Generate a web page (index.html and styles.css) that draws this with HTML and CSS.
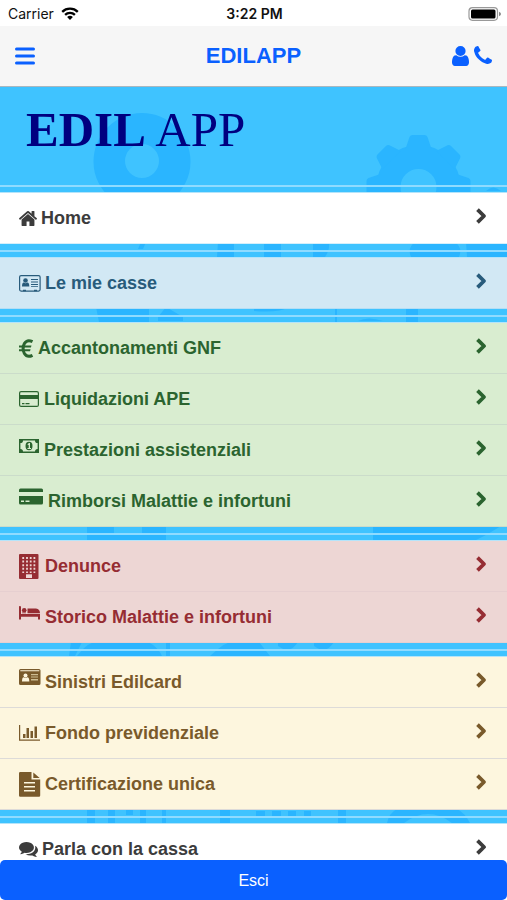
FILE: index.html
```html
<!DOCTYPE html>
<html lang="it">
<head>
<meta charset="utf-8">
<meta name="viewport" content="width=device-width, initial-scale=1">
<title>EDILAPP</title>
<link rel="stylesheet" href="styles.css">
</head>
<body>
<svg width="0" height="0" class="defs" aria-hidden="true">
  <symbol id="chevron" viewBox="0 0 12 18"><path d="M2.500 2.700 9 9l-6.500 6.300" fill="none" stroke="currentColor" stroke-width="3.800" stroke-linejoin="round"/></symbol>
</svg>
<div class="app">
  <div class="status">
    <div class="carrier">Carrier
      <svg width="18" height="13" viewBox="0 0 18 13" aria-hidden="true"><g fill="none" stroke="#000" stroke-width="2.300"><path d="M1.200 4.800a11.200 11.200 0 0 1 15.600 0"/><path d="M4.100 7.900a7 7 0 0 1 9.800 0"/></g><path d="M9 13 6.100 10.100a4.200 4.200 0 0 1 5.800 0z"/></svg>
    </div>
    <div class="clock">3:22 PM</div>
    <svg class="battery" width="33" height="14" viewBox="0 0 33 14" aria-hidden="true"><rect x="1" y=".700" width="28.500" height="12.600" rx="3.500" fill="#fff" stroke="#999" stroke-width="1.200"/><rect x="3" y="2.500" width="24.500" height="9" rx="1.500"/><path d="M31 4.700q2 .8 2 2.300t-2 2.300z" fill="#888"/></svg>
  </div>
  <header class="navbar">
    <button class="icon-button" aria-label="Menu"><svg width="20" height="18" viewBox="0 0 20 18"><path d="M1.500 2h17M1.500 9h17M1.500 16h17" stroke="currentColor" stroke-width="3" stroke-linecap="round"/></svg></button>
    <h1 class="navbar-title">EDILAPP</h1>
    <div class="actions">
      <button class="icon-button" aria-label="Profilo"><svg width="17" height="20" viewBox="256 128 1280 1536" preserveAspectRatio="none"><path fill="currentColor" d="M1536 1399q0 109-62.500 187t-150.500 78h-854q-88 0-150.500-78t-62.500-187q0-85 8.500-160.500t31.500-152 58.500-131 94-89 134.500-34.500q131 128 313 128t313-128q76 0 134.500 34.500t94 89 58.500 131 31.500 152 8.500 160.500zm-256-887q0 159-112.500 271.500t-271.500 112.500-271.500-112.500-112.500-271.500 112.500-271.500 271.500-112.500 271.500 112.500 112.500 271.500z"/></svg></button>
      <button class="icon-button" aria-label="Telefono"><svg width="18" height="18" viewBox="192 128 1408 1408"><path fill="currentColor" d="M1600 1240q0 27-10 70.500t-21 68.500q-21 50-122 106-94 51-186 51-27 0-53-3.500t-57.500-12.500-47-14.500-55.500-20.500-49-18q-98-35-175-83-127-79-264-216t-216-264q-48-77-83-175-3-9-18-49t-20.500-55.500-14.500-47-12.500-57.500-3.500-53q0-92 51-186 56-101 106-122 25-11 68.500-21t70.500-10q14 0 21 3 18 6 53 76 11 19 30 54t35 63.500 31 53.500q3 4 17.500 25t21.500 35.500 7 28.500q0 20-28.500 50t-62 55-62 53-28.500 46q0 9 5 22.500t8.500 20.500 14 24 11.500 19q76 137 174 235t235 174q2 1 19 11.500t24 14 20.500 8.500 22.500 5q18 0 46-28.500t53-62 55-62 50-28.500q14 0 28.500 7t35.500 21.500 25 17.500q25 15 53.500 31t63.500 35 54 30q70 35 76 53 3 7 3 21z"/></svg></button>
    </div>
  </header>
  <main class="content">
    <svg class="pattern" width="507" height="900" viewBox="0 0 507 900" aria-hidden="true">
      <g transform="translate(0 -88)" fill="#2ab5ff">
        <path fill-rule="evenodd" d="M142 114a48.500 48.500 0 0 1 48.500 48.500c0 34-30 40-48.500 84-18-44-48.500-50-48.500-84A48.500 48.500 0 0 1 142 114zm0 31a17 17 0 1 0 0 34 17 17 0 0 0 0-34z"/>
        <g transform="translate(418.500 188)">
          <circle r="30" fill="none" stroke="#2ab5ff" stroke-width="24"/>
          <path id="tooth" d="M-13-38-9-50q1-2 3-2H6q2 0 3 2L13-38z"/>
          <use href="#tooth" transform="rotate(45)"/><use href="#tooth" transform="rotate(90)"/><use href="#tooth" transform="rotate(-45)"/><use href="#tooth" transform="rotate(-90)"/>
        </g>
        <path d="M486 192q7-7 15 0zM264 243h17v15h-17zM313 243h16q1 8-4 15h-12zM218 243h16v15h-17zM138 250l3-7h5l-3 7zM411 258q-4-9 4-15h40q8 6 4 15zM466 243h41v15h-40z"/>
        <path d="M96 308h53v15H99zM158 318l8-10 17 10v4h-25zM254 308h35q-10 6-35 4zM335 308h2v15h-2zM406 308h12v15h-12zM358 322q10-5 25 0z"/>
        <path d="M87 527h27v14H87zM114 536h28v5h-28zM142 527h24v14h-24zM373 527h128l-15 9-10 5H373z"/>
        <path d="M71 643h11l-7 14h-6zM83 650q5-5 11-7h54q10 5 14 14H77zM166 643h4v14h-4zM218 650q6-5 12-7h24v14h-44zM254 643h5l11 14h-16zM278 643h20q-8 13-20 4zM314 643h20q-8 13-20 4z"/>
        <path d="M87 810h8v14h-8zM108 810h7v14h-7zM126 810h7v6h-7zM140 810h6v14h-6zM162 810h4v14h-4zM220 810h10v14h-10zM256 812h9v7h-9zM272 812h9v7h-9zM288 812h8v7h-8zM304 812h7v7h-7zM338 810h8v14h-8zM387 824q2-10 10-14h60q8 4 13 14h-18q-24-18-48 0z"/>
      </g>
    </svg>
    <div class="hero"><div class="logo"><strong>EDIL</strong> APP</div></div>
    <hr>
    <nav class="group neutral">
      <a class="row" href="#"><svg class="icon" width="18" height="15" viewBox="90 250 1612 1290" preserveAspectRatio="none"><path d="M1472 992v480q0 26-19 45t-45 19h-384v-384h-256v384h-384q-26 0-45-19t-19-45v-480q0-1 .5-3t.5-3l575-474 575 474q1 2 1 6zm223-69l-62 74q-8 9-21 11h-3q-13 0-21-7l-692-577-692 577q-12 8-24 7-13-2-21-11l-62-74q-8-10-7-23.500t11-21.500l719-599q32-26 76-26t76 26l244 204v-195q0-14 9-23t23-9h192q14 0 23 9t9 23v408l219 182q10 8 11 21.500t-7 23.500z"/></svg><span>Home</span><svg class="chevron"><use href="#chevron"/></svg></a>
    </nav>
    <hr>
    <nav class="group info">
      <a class="row" href="#"><svg class="icon" width="22" height="17" viewBox="0 0 22 17"><rect x=".6" y=".6" width="20.500" height="15.500" rx="1.500" fill="none" stroke="currentColor" stroke-width="1.200"/><circle cx="6.500" cy="5.500" r="2.300"/><path d="M3 11.500q0-4 1.800-4 1.700 1.400 3.500 0 2 0 2 4zM12 4h7v1h-7zM12 6.500h7v1h-7zM12 9h7v1h-7zM12 11.200h7v.800h-7zM4 14.700h3v1.500H4zM15 14.700h3v1.500h-3z"/></svg><span>Le mie casse</span><svg class="chevron"><use href="#chevron"/></svg></a>
    </nav>
    <hr>
    <nav class="group success">
      <a class="row" href="#"><svg class="icon" width="15" height="19" viewBox="0 0 15 19"><path d="M13.500 2.700Q8.200 0 5.400 4.500 2.800 9.500 5.400 14.500 8.200 19 13.500 16.300" fill="none" stroke="currentColor" stroke-width="3"/><path d="M0 6.500h12.500l-.6 2H0zM0 10.300h11.600l-.6 2H0z"/></svg><span>Accantonamenti GNF</span><svg class="chevron"><use href="#chevron"/></svg></a>
      <a class="row" href="#"><svg class="icon" width="21" height="16" viewBox="0 0 21 16"><rect x=".6" y=".6" width="18.800" height="14.800" rx="1.500" fill="none" stroke="currentColor" stroke-width="1.200"/><path d="M0 4h20v4H0zM3 12h2.500v1.200H3zM6.500 12h4v1.200h-4z"/></svg><span>Liquidazioni APE</span><svg class="chevron"><use href="#chevron"/></svg></a>
      <a class="row" href="#"><svg class="icon raised" width="21" height="14" viewBox="0 0 21 14"><path fill-rule="evenodd" d="M0 0h20v14H0zM4 1.400Q4 4 1.400 4v6Q4 10 4 12.600h12Q16 10 18.600 10V4Q16 4 16 1.400z"/><ellipse cx="10" cy="7" rx="3.500" ry="4.200"/><path d="M8.500 5.200 10 4h1v5h1v1H8.500V9H9.700V5.800l-.7.400z" fill="#d9edd0"/></svg><span>Prestazioni assistenziali</span><svg class="chevron"><use href="#chevron"/></svg></a>
      <a class="row" href="#"><svg class="icon raised" width="25" height="17" viewBox="0 0 25 17"><path fill-rule="evenodd" d="M0 4V2Q0 .5 1.500.5h21Q24 .5 24 2v2zM0 8h24v7q0 1.500-1.500 1.500h-21Q0 16.500 0 15zM2 12.500V14h3v-1.500zm4.500 0V14h4v-1.500z"/></svg><span>Rimborsi Malattie e infortuni</span><svg class="chevron"><use href="#chevron"/></svg></a>
    </nav>
    <hr>
    <nav class="group danger">
      <a class="row" href="#"><svg class="icon" width="22" height="25" viewBox="0 0 22 25"><rect width="19.500" height="25" rx="1"/><path d="M4.200 3v16M8 3v16M11.700 3v16M15.400 3v16" stroke="#edd6d4" stroke-width="1.800" stroke-dasharray="2 1.600"/><path d="M7 20.300h6V24H7z" fill="#edd6d4"/></svg><span>Denunce</span><svg class="chevron"><use href="#chevron"/></svg></a>
      <a class="row" href="#"><svg class="icon raised" width="22" height="14" viewBox="0 0 22 14"><path d="M0 .5Q0 0 .8 0t1.200.5V8h19v5.500h-2V10.800H2v2.700H0zM8.500 2.500H17q4 .5 4 4.800H8.500zM3 7.300V6.500h4v.8z"/><circle cx="5.200" cy="4.300" r="2.300"/></svg><span>Storico Malattie e infortuni</span><svg class="chevron"><use href="#chevron"/></svg></a>
    </nav>
    <hr>
    <nav class="group warning">
      <a class="row" href="#"><svg class="icon raised" width="22" height="17" viewBox="0 0 22 17"><path fill-rule="evenodd" d="M1.500 0h18.500q1.500 0 1.500 1.500v13q0 1.500-1.500 1.500H1.500Q0 16 0 14.500v-13Q0 0 1.500 0zM1.300 1.300v1h19v-1z"/><circle cx="6.500" cy="6.500" r="2" fill="#fdf6de"/><path d="M3 12.500q0-4.300 1.800-4.300 1.700 1.300 3.500 0 2 0 2 4.300z" fill="#fdf6de"/><path d="M12 5h7v1.300h-7zM12 7.500h7v1h-7zM12 10h7v1.500h-7z" fill="#cdbd93"/></svg><span>Sinistri Edilcard</span><svg class="chevron"><use href="#chevron"/></svg></a>
      <a class="row" href="#"><svg class="icon" width="22" height="16" viewBox="0 0 22 16"><path d="M0 0h1.200v14.500H21V15.700H0zM4 9h2.500v4H4zM7.500 3H10v10H7.500zM11.500 6H14v7h-2.500zM15.500 1.500H18V13h-2.500z"/></svg><span>Fondo previdenziale</span><svg class="chevron"><use href="#chevron"/></svg></a>
      <a class="row" href="#"><svg class="icon" width="22" height="25" viewBox="0 0 22 25"><path fill-rule="evenodd" d="M1.200 0H12.500v7.500h8.700v16q0 1.300-1.200 1.300H1.200Q0 24.800 0 23.500V1.200Q0 0 1.200 0zM5 10v1.600h11V10zm0 4v1.600h11V14zm0 4v1.600h11V18zM14.300.5 20.700 6h-6.400z"/></svg><span>Certificazione unica</span><svg class="chevron"><use href="#chevron"/></svg></a>
    </nav>
    <hr>
    <nav class="group neutral">
      <a class="row" href="#"><svg class="icon" width="19" height="15" viewBox="0 256 1792 1410" preserveAspectRatio="none"><path d="M1408 768q0 139-94 257t-256.500 186.500-353.500 68.500q-86 0-176-16-124 88-278 128-36 9-86 16h-3q-11 0-20.500-8t-11.500-21q-1-3-1-6.500t.5-6.500 2-6l2.500-5 3.500-5.500 4-5 4.500-5 4-4.500q5-6 23-25t26-29.500 22.500-29 25-38.500 20.500-44q-124-72-195-177t-71-224q0-139 94-257t256.500-186.500 353.500-68.500 353.500 68.500 256.500 186.500 94 257zm384 256q0 120-71 224.500t-195 176.500q10 24 20.500 44t25 38.500 22.500 29 26 29.500 23 25q1 1 4 4.500t4.500 5 4 5 3.500 5.500l2.500 5 2 6 .5 6.500-1 6.500q-3 14-13 22t-22 7q-50-7-86-16-154-40-278-128-90 16-176 16-271 0-472-132 58 4 88 4 161 0 309-45t264-129q125-92 192-212t67-254q0-77-23-152 129 71 204 178t75 230z"/></svg><span>Parla con la cassa</span><svg class="chevron"><use href="#chevron"/></svg></a>
    </nav>
  </main>
  <footer class="footer"><button class="logout">Esci</button></footer>
</div>
</body>
</html>
```
FILE: styles.css
```css
* { box-sizing: border-box; }

body {
  margin: 0;
  font-family: "Liberation Sans", Arial, sans-serif;
  background: #fff;
}

.defs { position: absolute; }

.app {
  display: flex;
  flex-direction: column;
  height: 100vh;
}

.status {
  display: grid;
  grid-template-columns: 1fr auto 1fr;
  align-items: center;
  height: 26px;
  padding: 1px 6px 0 8px;
  flex-shrink: 0;
  font: 14px Inter, sans-serif;
  color: #111;
}

.carrier {
  display: flex;
  align-items: center;
  gap: 7px;
}

.clock { font-weight: 600; }
.battery { justify-self: end; }

.navbar {
  display: grid;
  grid-template-columns: 1fr auto 1fr;
  align-items: center;
  height: 61px;
  padding: 0 15px;
  flex-shrink: 0;
  background: #f6f6f6;
  border-bottom: 1px solid #a9b7bf;
  color: #0a60ff;
}

.navbar-title {
  margin: 0;
  font-size: 22px;
  line-height: 26px;
}

.icon-button {
  display: flex;
  justify-self: start;
  padding: 0;
  border: 0;
  background: none;
  color: inherit;
}

.actions {
  display: flex;
  justify-content: flex-end;
  gap: 5px;
}

.content {
  position: relative;
  flex: 1;
  min-height: 0;
  overflow-y: auto;
  scrollbar-width: none;
  background: #3fc3ff;
}

.pattern {
  position: absolute;
  top: 0;
  left: 0;
}

.hero {
  position: relative;
  height: 98px;
  padding: 15px 26px;
}

.logo {
  font: 49px/56px "Liberation Serif", "Times New Roman", serif;
  color: #000080;
}

hr {
  position: relative;
  height: 2px;
  margin: 0 0 5px;
  border: 0;
  background: #8fdbff;
}

.group {
  position: relative;
  margin-bottom: 6px;
  border-top: 1px solid #b4e4fa;
}

.row {
  display: flex;
  align-items: center;
  gap: 4px;
  height: 51px;
  padding: 0 20px 0 19px;
  border-bottom: 1px solid var(--line);
  background: var(--fill);
  color: inherit;
  font-size: 18px;
  font-weight: bold;
  line-height: 22px;
  text-decoration: none;
}

.icon {
  flex-shrink: 0;
  fill: currentColor;
}

.raised { margin-bottom: 9px; }

.chevron {
  width: 12px;
  height: 18px;
  margin: 0 0 4px auto;
}

.neutral { --fill: #fff; --line: #d5effb; color: #3c3c3c; }
.info { --fill: #d2e8f4; --line: #b4def5; color: #285b7b; }
.success { --fill: #d9edd0; --line: #cbdcca; color: #2b642f; }
.danger { --fill: #edd6d4; --line: #e6cfd0; color: #962d33; }
.warning { --fill: #fdf6de; --line: #dddbd8; color: #795a2b; }

.footer {
  flex-shrink: 0;
  background: #fff;
}

.logout {
  display: block;
  width: 100%;
  height: 40px;
  padding: 2px 0 0;
  border: 0;
  border-radius: 5px;
  background: #0a60ff;
  color: #fff;
  font: 16px "Liberation Sans", Arial, sans-serif;
}
```
